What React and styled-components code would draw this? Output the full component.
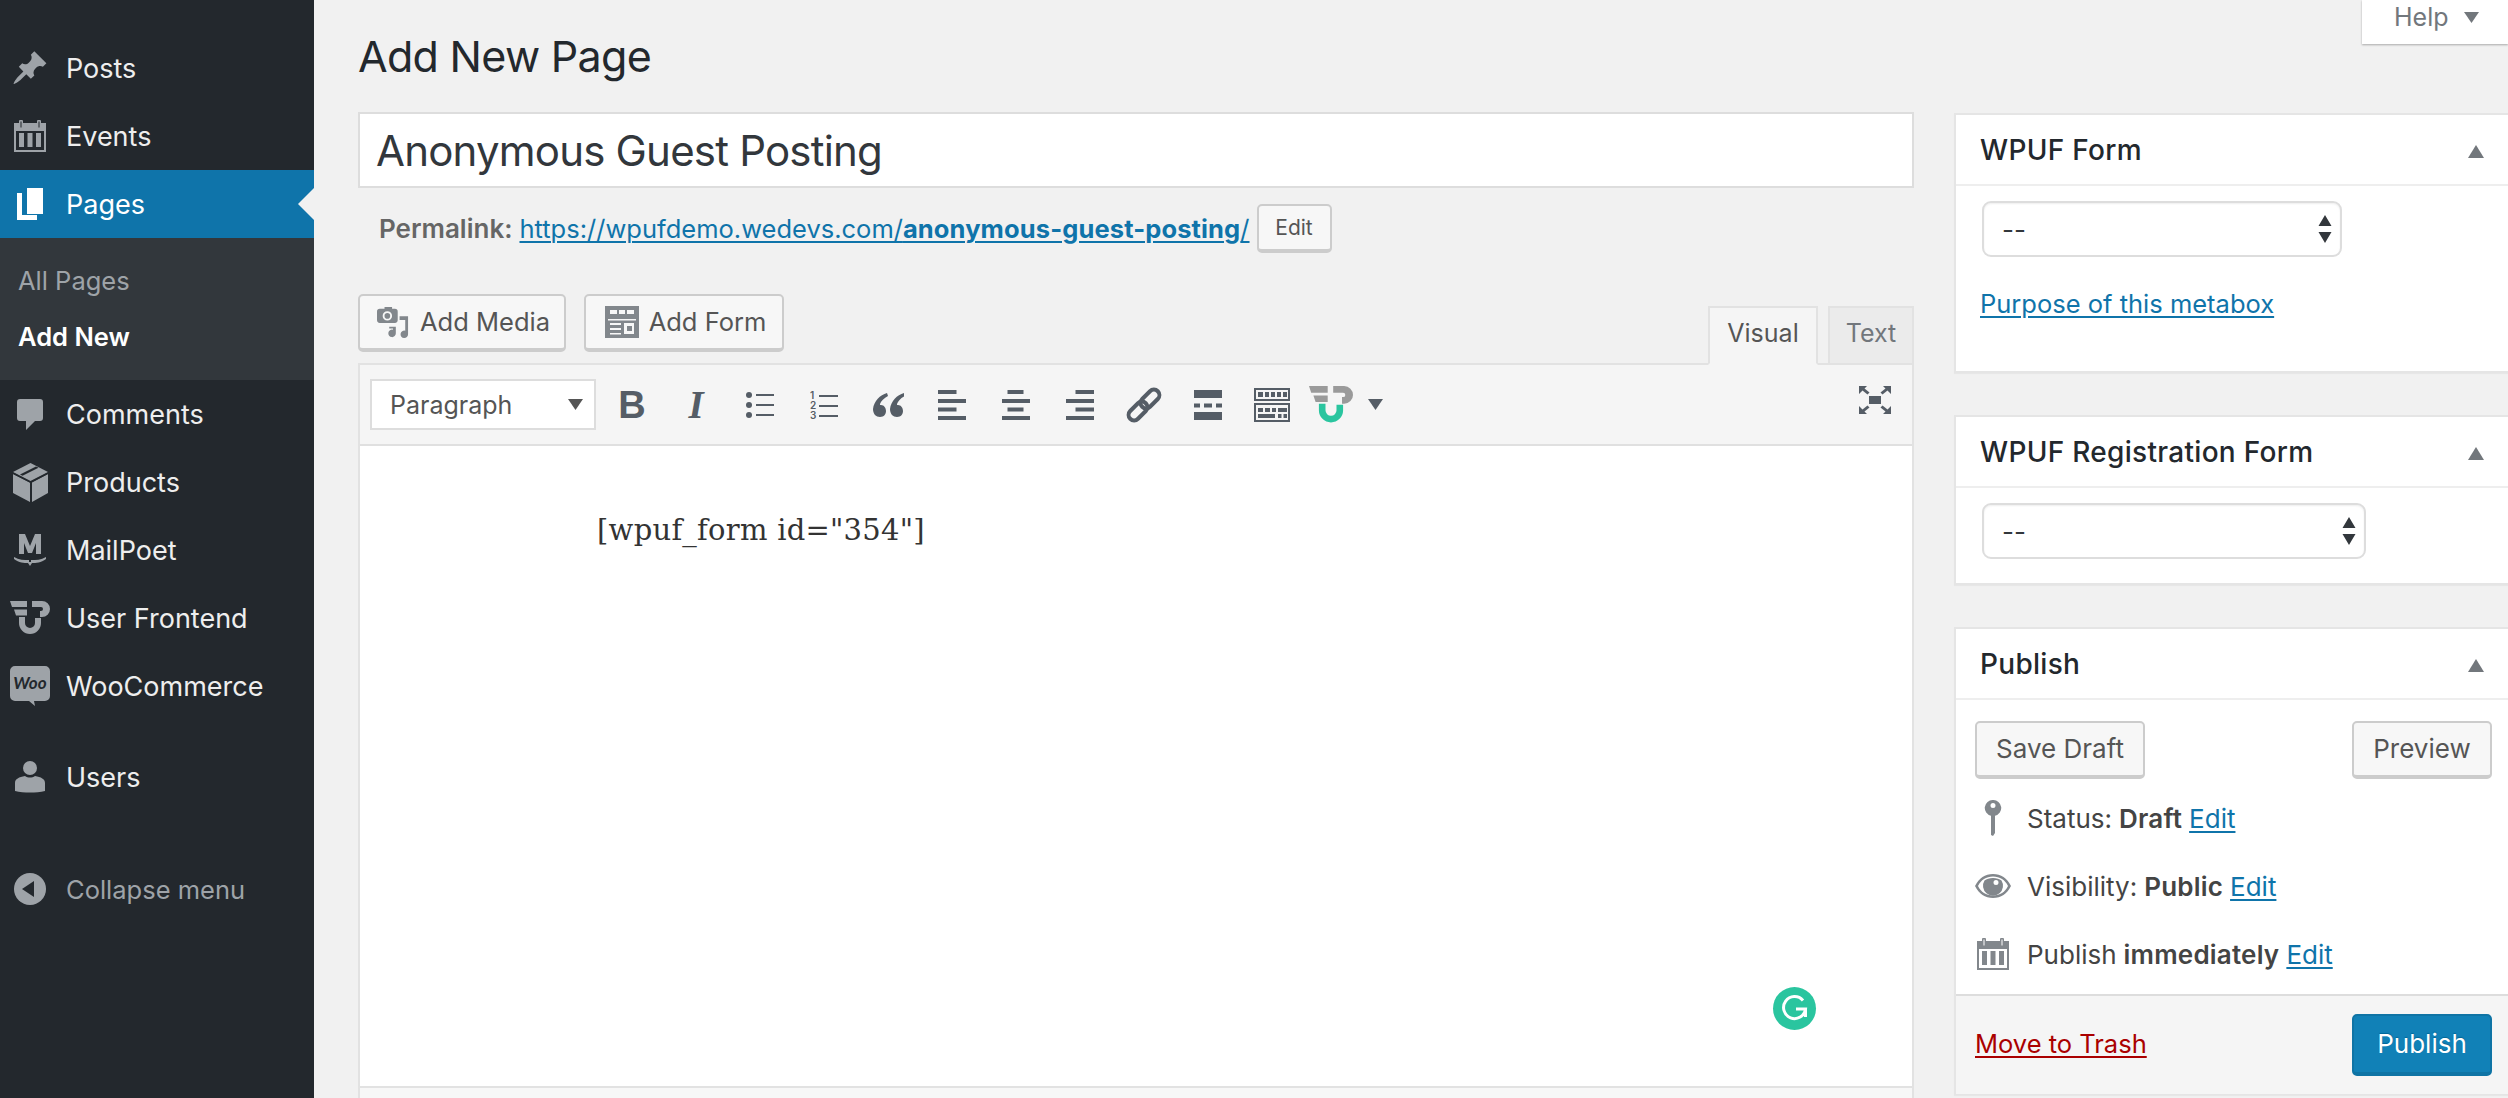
import React from 'react';
import styled, { createGlobalStyle } from 'styled-components';

const Global = createGlobalStyle`
  html, body { margin: 0; padding: 0; background: #f1f1f1; }
  * { box-sizing: border-box; }
  body { font-family: Inter, "Noto Sans", sans-serif; color: #444; }
`;

const Page = styled.div`
  display: flex;
  width: 2508px;
  height: 1098px;
  overflow: hidden;
  background: #f1f1f1;
`;

/* sidebar */
const Sidebar = styled.nav`
  flex: 0 0 314px;
  background: #23282d;
  padding-top: 34px;
`;

const MenuRow = styled.div`
  position: relative;
  display: flex;
  align-items: center;
  height: 68px;
  margin-top: ${({ $gap }) => $gap || 0}px;
  padding-left: 66px;
  font-size: ${({ $muted }) => ($muted ? 25.5 : 27)}px;
  color: ${({ $active, $muted }) => ($active ? '#fff' : $muted ? '#9ea3a8' : '#eee')};
  background: ${({ $active }) => ($active ? '#0f74aa' : 'transparent')};

  ${({ $active }) => $active && `
    &::after {
      content: '';
      position: absolute;
      right: 0;
      top: 18px;
      border: 16px solid transparent;
      border-left: 0;
      border-right-color: #f1f1f1;
    }
  `}
`;

const MenuIcon = styled.span`
  position: absolute;
  left: 0;
  top: 0;
  width: 60px;
  height: 68px;
  display: flex;
  align-items: center;
  justify-content: center;
  color: ${({ $active }) => ($active ? '#fff' : '#9ea3a8')};
  svg { display: block; }
`;

const SubMenu = styled.div`
  height: 142px;
  background: #32373c;
  padding-top: 14px;
`;

const SubItem = styled.div`
  height: 56px;
  padding-left: 18px;
  display: flex;
  align-items: center;
  font-size: 25.5px;
  font-weight: ${({ $current }) => ($current ? 600 : 400)};
  color: ${({ $current }) => ($current ? '#fff' : '#9ea3a8')};
`;

/* main area */
const Main = styled.main`
  position: relative;
  flex: 1;
  min-width: 0;
  overflow: hidden;
  padding-left: 44px;
`;

const HelpTab = styled.div`
  position: absolute;
  right: 0;
  top: 0;
  width: 146px;
  height: 44px;
  background: #fff;
  box-shadow: 0 1px 2px rgba(0, 0, 0, 0.3);
  display: flex;
  align-items: center;
  padding: 0 0 10px 32px;
  gap: 15px;
  font-size: 25px;
  color: #72777c;
`;

const Heading = styled.h1`
  margin: 0;
  height: 112px;
  padding-top: 30px;
  font-size: 43px;
  letter-spacing: -0.7px;
  line-height: 52px;
  font-weight: 400;
  color: #23282d;
`;

const Columns = styled.div`
  display: flex;
  gap: 40px;
  align-items: flex-start;
`;

const LeftColumn = styled.div`
  flex: 0 0 1556px;
`;

const SideColumn = styled.aside`
  flex: 0 0 570px;
  margin-top: 1px;
`;

const TitleInput = styled.div`
  height: 76px;
  border: 2px solid #ddd;
  background: #fff;
  padding-left: 16px;
  display: flex;
  align-items: center;
  font-size: 42px;
  letter-spacing: -0.8px;
  color: #32373c;
`;

const PermalinkRow = styled.div`
  display: flex;
  align-items: center;
  height: 49px;
  margin-top: 16px;
  padding-left: 21px;
  font-size: 25.5px;
  color: #666;
  > b { font-size: 26px; font-weight: 600; margin-right: 7px; }
`;

const BlueLink = styled.a`
  color: #0f74aa;
  text-decoration: underline;
  text-decoration-thickness: 2px;
  text-underline-offset: 3px;
  b { color: #0f74aa; margin: 0; font-weight: 700; letter-spacing: 0.12px; }
`;

const Button = styled.div`
  display: inline-flex;
  align-items: center;
  justify-content: center;
  height: ${({ $h }) => $h || 58}px;
  width: ${({ $w }) => $w}px;
  gap: ${({ $gap }) => $gap || 0}px;
  padding-bottom: 1px;
  border: 2px solid #ccc;
  border-bottom-width: 4px;
  border-radius: 5px;
  background: #f7f7f7;
  font-size: ${({ $fs }) => $fs || 26}px;
  color: #555;
  svg { display: block; color: #82878c; }
`;

const EditButton = styled(Button)`
  margin-left: 7px;
`;

const EditorButton = styled(Button)`
  padding-left: 3px;
  font-size: 25.5px;
`;

const MediaRow = styled.div`
  display: flex;
  height: 69px;
  margin-top: 41px;
  gap: 18px;
  position: relative;
  z-index: 1;
`;

const Tabs = styled.div`
  margin-left: auto;
  align-self: flex-end;
  display: flex;
  gap: 10px;
  margin-bottom: -2px;
`;

const Tab = styled.div`
  height: 59px;
  width: ${({ $w }) => $w}px;
  border: 2px solid #e2e2e2;
  border-bottom-color: ${({ $active }) => ($active ? '#f5f5f5' : '#e2e2e2')};
  background: ${({ $active }) => ($active ? '#f5f5f5' : '#ebebeb')};
  color: ${({ $active }) => ($active ? '#555' : '#72777c')};
  display: flex;
  align-items: center;
  justify-content: center;
  padding-bottom: 5px;
  font-size: 25px;
`;

const EditorBox = styled.div`
  border: 2px solid #e2e2e2;
  background: #fff;
  height: 760px;
`;

const Toolbar = styled.div`
  display: flex;
  align-items: center;
  height: 81px;
  padding: 0 5px 0 10px;
  background: #f5f5f5;
  border-bottom: 2px solid #e0e0e0;
`;

const FormatSelect = styled.div`
  flex: 0 0 226px;
  height: 51px;
  margin-right: 4px;
  background: #fff;
  border: 2px solid #ddd;
  padding: 0 11px 0 18px;
  display: flex;
  align-items: center;
  justify-content: space-between;
  font-size: 25px;
  color: #555;
`;

const ToolSlot = styled.div`
  flex: 0 0 ${({ $w }) => $w || 64}px;
  display: flex;
  align-items: center;
  justify-content: center;
  color: #555d66;
  svg { display: block; }
`;

const FullscreenSlot = styled(ToolSlot)`
  margin-left: auto;
  margin-bottom: 9px;
`;

const BoldGlyph = styled.span`
  font-family: "Liberation Sans", sans-serif;
  font-weight: 700;
  font-size: 38px;
  line-height: 1;
`;

const ItalicGlyph = styled.span`
  font-family: "Liberation Serif", serif;
  font-weight: 700;
  font-style: italic;
  font-size: 39px;
  line-height: 1;
`;

const Content = styled.div`
  height: 640px;
  padding: 64px 0 0 237px;
  position: relative;
  font-family: "DejaVu Serif", serif;
  font-size: 29px;
  line-height: 40px;
  letter-spacing: 0.25px;
  color: #333;
`;

const GrammarlyBadge = styled.div`
  position: absolute;
  left: 1413px;
  top: 541px;
  width: 43px;
  height: 43px;
  border-radius: 50%;
  background: #2ac59f;
  display: flex;
  align-items: center;
  justify-content: center;
`;

const StatusBar = styled.div`
  height: 40px;
  background: #f7f7f7;
  border-top: 2px solid #e2e2e2;
`;

/* meta boxes */
const MetaBox = styled.section`
  background: #fff;
  border: 2px solid #e5e5e5;
  box-shadow: 0 1px 1px rgba(0, 0, 0, 0.04);
  margin-bottom: ${({ $mb }) => $mb || 0}px;
  height: ${({ $h }) => $h}px;
`;

const BoxHeader = styled.header`
  height: 71px;
  padding: 0 38px 0 24px;
  border-bottom: 2px solid #eee;
  display: flex;
  align-items: center;
  justify-content: space-between;
  font-size: 28px;
  font-weight: 500;
  letter-spacing: 0.3px;
  color: #23282d;
`;

const CollapseArrow = styled.span`
  width: 0;
  height: 0;
  margin-top: 4px;
  border-left: 8px solid transparent;
  border-right: 8px solid transparent;
  border-bottom: 13px solid #72777c;
`;

const StepperSelect = styled.div`
  width: ${({ $w }) => $w}px;
  height: 56px;
  margin: 15px 0 0 26px;
  border: 2px solid #ddd;
  border-radius: 9px;
  box-shadow: inset 0 1px 2px rgba(0, 0, 0, 0.07);
  padding: 0 8px 0 18px;
  display: flex;
  align-items: center;
  justify-content: space-between;
  font-size: 26px;
  color: #32373c;
  svg { display: block; }
`;

const PurposeLink = styled(BlueLink)`
  display: block;
  margin: 31px 0 0 24px;
  font-size: 25.5px;
  line-height: 32px;
`;

const PublishActions = styled.div`
  display: flex;
  justify-content: space-between;
  padding: 21px 0 0 19px;
  width: 536px;
`;

const MetaRow = styled.div`
  position: relative;
  display: flex;
  align-items: center;
  height: 68px;
  padding-left: 71px;
  font-size: 26px;
  color: #444;
  b { font-weight: 600; margin: 0 7px; letter-spacing: 0.2px; }
`;

const FirstMetaRow = styled(MetaRow)`
  margin-top: 5px;
`;

const MetaIcon = styled.span`
  position: absolute;
  left: 17px;
  top: 14px;
  width: 40px;
  height: 40px;
  display: flex;
  align-items: center;
  justify-content: center;
  color: #82878c;
  svg { display: block; }
`;

const BoxFooter = styled.div`
  margin-top: 6px;
  height: 100px;
  background: #f5f5f5;
  border-top: 2px solid #ddd;
  display: flex;
  align-items: center;
  justify-content: space-between;
  padding-left: 19px;
`;

const TrashLink = styled.a`
  color: #a00;
  font-size: 25.5px;
  margin-bottom: 4px;
  text-decoration: underline;
  text-decoration-thickness: 2px;
  text-underline-offset: 3px;
`;

const PublishButton = styled.div`
  width: 140px;
  height: 62px;
  margin-right: 30px;
  margin-top: -1px;
  border-radius: 5px;
  border: 2px solid #0f74a5;
  border-bottom-width: 4px;
  background: #1181b7;
  color: #fff;
  display: flex;
  align-items: center;
  justify-content: center;
  font-size: 26px;
  text-shadow: 0 -1px 1px #006799;
`;

const SoftSvg = styled.svg`
  filter: ${({ $blur }) => ($blur ? 'blur(0.6px)' : 'none')};
`;

/* drawings */
const Caret = ({ c = 'currentColor', w = 15, h = 11 }) => (
  <svg width={w} height={h} viewBox="0 0 15 11"><path fill={c} d="M0 0h15L7.5 11z" /></svg>
);

const PinIcon = () => (
  <svg width="38" height="38" viewBox="0 0 20 20" fill="currentColor">
    <path d="M10.44 3.02l1.82-1.82 6.36 6.35-1.83 1.82c-1.05-.68-2.48-.57-3.41.36l-.75.75c-.92.93-1.04 2.35-.35 3.41l-1.83 1.82-2.41-2.41-2.8 2.79c-.42.42-3.38 2.71-3.8 2.29s1.86-3.39 2.28-3.81l2.79-2.79L4.1 9.36l1.83-1.82c1.05.69 2.48.57 3.4-.36l.75-.75c.93-.92 1.05-2.35.36-3.41z" />
  </svg>
);

const CalendarIcon = ({ size = 32 }) => (
  <svg width={size} height={size} viewBox="0 0 32 32" fill="currentColor">
    <path fillRule="evenodd" d="M0 3h5V1.500a2 2 0 0 1 4 0V3h14V1.500a2 2 0 0 1 4 0V3h5v29H0zM6.500 1.500v6h1v-6zM24.500 1.500v6h1v-6zM2 11v19h28V11z" />
    <path d="M5 13h5v14H5zM13.500 13h5v14h-5zM22 13h5v14h-5z" />
  </svg>
);

const PagesIcon = () => (
  <svg width="26" height="32" viewBox="0 0 26 32" fill="currentColor">
    <path d="M10 0h16v26H10z" />
    <path d="M0 5h5v22h15v5H0z" />
  </svg>
);

const CommentIcon = () => (
  <svg width="26" height="31" viewBox="0 0 26 31" fill="currentColor">
    <path d="M3 0h20a3 3 0 0 1 3 3v16a3 3 0 0 1-3 3h-5l-9 9v-9H3a3 3 0 0 1-3-3V3a3 3 0 0 1 3-3z" />
  </svg>
);

const BoxIcon = () => (
  <svg width="35" height="39" viewBox="0 0 35 39" fill="currentColor">
    <path d="M0 11l17 8.500V39L0 30zM35 11v19l-16 9V19.500z" />
    <path d="M17.500 0L35 9l-17.500 9L0 9z" />
    <path d="M7 11.500L23 3.500l2.500 1.300-16 8z" fill="#23282d" />
    <path d="M0 9.500l17.500 9 17.500-9v1.500l-17.500 9L0 11z" fill="#23282d" />
  </svg>
);

const MailPoetIcon = () => (
  <SoftSvg $blur width="34" height="34" viewBox="0 0 34 34" fill="currentColor">
    <path d="M6 1h6l5 12 5-12h6v20h-5V10l-4 10h-4L11 10v11H6z" />
    <path d="M1 24c5 3 10 3 15 3v2h2v-2c5 0 10 0 15-3v2c-5 4-10 4-14 4l-2 3-2-3c-4 0-9 0-14-4z" />
  </SoftSvg>
);

const UserFrontendLogo = ({ top = 'currentColor', bottom = 'currentColor', blur, width = 40 }) => (
  <SoftSvg $blur={blur} width={width} height={(width * 36) / 40} viewBox="0 0 40 36">
    <path fill={top} d="M0 1h17v6H2zM4 9.500h13v6H6zM22 1h10a8 8 0 0 1 8 8v0a8 8 0 0 1-8 8h-2v-6h1a2 2 0 0 0 0-4h-9z" />
    <path fill={bottom} d="M9 17h6v6a5 5 0 0 0 10 0v-5h6v5a11 11 0 0 1-22 0z" />
  </SoftSvg>
);

const WooIcon = () => (
  <svg width="40" height="40" viewBox="0 0 40 40">
    <path fill="currentColor" d="M5 0h30a5 5 0 0 1 5 5v25a5 5 0 0 1-5 5h-11l1 5-6-5H5a5 5 0 0 1-5-5V5a5 5 0 0 1 5-5z" />
    <text x="20" y="23" textAnchor="middle" fontFamily="Lato, sans-serif" fontWeight="700" fontStyle="italic" fontSize="17" fill="#23282d">Woo</text>
  </svg>
);

const UserIcon = () => (
  <svg width="30" height="32" viewBox="0 0 30 32" fill="currentColor">
    <circle cx="15" cy="7" r="7" />
    <path d="M10 15c3 2 7 2 10 0 6 1 10 3 10 7v8c-9 2-21 2-30 0v-8c0-4 4-6 10-7z" />
  </svg>
);

const CollapseIcon = () => (
  <svg width="32" height="32" viewBox="0 0 32 32">
    <circle cx="16" cy="16" r="16" fill="#9ea3a8" />
    <path d="M20 8v16L8 16z" fill="#23282d" />
  </svg>
);

const MediaIcon = () => (
  <svg width="32" height="34" viewBox="0 0 34 34" fill="currentColor">
    <path fillRule="evenodd" d="M6 3h2V1h8v2h3a3 3 0 0 1 3 3v9a3 3 0 0 1-3 3H3a3 3 0 0 1-3-3V6a3 3 0 0 1 3-3zM11 5.500a5 5 0 1 0 0 10 5 5 0 0 0 0-10z" />
    <circle cx="11" cy="10.500" r="3" />
    <path d="M24 11h9v19a4 4 0 1 1-3-3.800V15h-6zM13 22h7v7a4 4 0 1 1-3-3.800V24h-4z" />
  </svg>
);

const FormIcon = () => (
  <svg width="34" height="32" viewBox="0 0 34 32">
    <path fill="currentColor" d="M0 0h34v32H0z" />
    <path fill="#f7f7f7" d="M5 4h7v4H5zM14 4h6v4h-6zM22 4h7v4h-7zM3 13h28v1.500H3zM5 17h11v2H5zM5 22h11v2H5zM5 27h11v1.500H5zM19 17h10v11H19z" />
    <path fill="currentColor" d="M22 20h5v5h-5z" />
  </svg>
);

const ListIcon = () => (
  <svg width="28" height="26" viewBox="0 0 28 26" fill="currentColor">
    <circle cx="3" cy="3" r="3" /><circle cx="3" cy="13" r="3" /><circle cx="3" cy="23" r="3" />
    <path d="M10 2h18v2H10zM10 12h18v2H10zM10 22h18v2H10z" />
  </svg>
);

const NumberedIcon = () => (
  <svg width="28" height="30" viewBox="0 0 28 30" fill="currentColor">
    <text x="0" y="9" fontSize="10" fontFamily="Inter, sans-serif" fontWeight="600">1</text>
    <text x="0" y="19" fontSize="10" fontFamily="Inter, sans-serif" fontWeight="600">2</text>
    <text x="0" y="29" fontSize="10" fontFamily="Inter, sans-serif" fontWeight="600">3</text>
    <path d="M9 5h19v2H9zM9 15h19v2H9zM9 25h19v2H9z" />
  </svg>
);

const QuoteIcon = () => (
  <svg width="31" height="24" viewBox="0 0 31 24" fill="currentColor">
    <path d="M14 0C7 2 1 8 0 16c0 5 3 8 7 8s6-3 6-6-2-6-5-6c-1 0-1 0-1-1 1-3 4-6 8-8zM31 0c-7 2-13 8-14 16 0 5 3 8 7 8s6-3 6-6-2-6-5-6c-1 0-1 0-1-1 1-3 4-6 8-8z" />
  </svg>
);

const AlignIcon = ({ variant }) => {
  const short = variant === 'left' ? 0 : variant === 'center' ? 5.500 : 9.500;
  const w = variant === 'center' ? 16 : 18.500;
  return (
    <svg width="28" height="30" viewBox="0 0 28 30" fill="currentColor">
      <path d="M0 9h28v4H0zM0 26h28v4H0z" />
      <rect x={short} y="0" width={w} height="4" />
      <rect x={short} y="17.500" width={w} height="4" />
    </svg>
  );
};

const LinkIcon = () => (
  <svg width="36" height="36" viewBox="0 0 36 36" fill="none" stroke="currentColor" strokeWidth="4">
    <rect x="-11" y="-5.500" width="22" height="11" rx="5.500" transform="translate(24 12) rotate(-45)" />
    <rect x="-11" y="-5.500" width="22" height="11" rx="5.500" transform="translate(12 24) rotate(-45)" />
  </svg>
);

const MoreIcon = () => (
  <svg width="28" height="30" viewBox="0 0 28 30" fill="currentColor">
    <path d="M0 0h28v8H0zM0 22h28v8H0zM0 13.500h6v4H0zM10 13.500h8v4h-8zM22 13.500h6v4h-6z" />
  </svg>
);

const KitchenIcon = () => (
  <svg width="36" height="34" viewBox="0 0 36 34">
    <path fill="currentColor" fillRule="evenodd" d="M0 0h36v13H0zM2 2v9h32V2zM0 15h36v19H0zM2 17v15h32V17z" />
    <path fill="currentColor" d="M4 4h5v5H4zM11 4h4v5h-4zM17 4h4v5h-4zM23 4h4v5h-4zM29 4h4v5h-4zM4 20h5v4H4zM11 20h5v4h-5zM18 20h4v4h-4zM24 20h9v4h-9zM4 26h17v4H4zM24 26h3.500v4H24zM29.500 26H33v4h-3.500z" />
  </svg>
);

const FullscreenIcon = () => (
  <svg width="32" height="28" viewBox="0 0 32 28" fill="currentColor">
    <path d="M10 10h12v8H10zM0 0h8L5.500 2.500l5 4-2 2-5-4L0 8zM32 0h-8l2.500 2.500-5 4 2 2 5-4L32 8zM0 28h8l-2.500-2.500 5-4-2-2-5 4L0 20zM32 28h-8l2.500-2.500-5-4 2-2 5 4L32 20z" />
  </svg>
);

const StepperArrows = () => (
  <svg width="14" height="28" viewBox="0 0 14 28" fill="#32373c">
    <path d="M7 0l6.500 11H.500zM7 28L.500 17h13z" />
  </svg>
);

const KeyIcon = () => (
  <svg width="18" height="36" viewBox="0 0 18 36" fill="currentColor">
    <path fillRule="evenodd" d="M9 0a8 8 0 0 1 2 15.800V33l-2 3-2-1V15.800A8 8 0 0 1 9 0zM9 3a2.500 2.500 0 1 0 0 5 2.500 2.500 0 0 0 0-5z" />
  </svg>
);

const EyeIcon = () => (
  <svg width="36" height="26" viewBox="0 0 36 26" fill="currentColor">
    <path fillRule="evenodd" d="M0 13C4 5 10 1 18 1s14 4 18 12c-4 8-10 12-18 12S4 21 0 13zM3 13c3 6 8 9.500 15 9.500S30 19 33 13C30 7 25 3.500 18 3.500S6 7 3 13z" />
    <path fillRule="evenodd" d="M9.500 7.500a10 10 0 1 0 17 0c-2-1.500-5-2.500-8.500-2.500s-6.500 1-8.500 2.500zM21 7a2.500 2.500 0 1 1 0 5 2.500 2.500 0 0 1 0-5z" />
  </svg>
);

const GrammarlyMark = () => (
  <svg width="27" height="27" viewBox="0 0 27 27" fill="none" stroke="#fff" strokeWidth="3">
    <path d="M22 5.500A11 11 0 1 0 24.500 14H15" />
    <path d="M24.500 14v8" />
  </svg>
);

const menuTop = [
  { label: 'Posts', icon: <PinIcon /> },
  { label: 'Events', icon: <CalendarIcon /> },
];

const menuBottom = [
  { label: 'Comments', icon: <CommentIcon /> },
  { label: 'Products', icon: <BoxIcon /> },
  { label: 'MailPoet', icon: <MailPoetIcon /> },
  { label: 'User Frontend', icon: <UserFrontendLogo /> },
  { label: 'WooCommerce', icon: <WooIcon /> },
];

const App = () => (
  <Page>
    <Global />
    <Sidebar>
      {menuTop.map((item) => (
        <MenuRow key={item.label}>
          <MenuIcon>{item.icon}</MenuIcon>
          {item.label}
        </MenuRow>
      ))}
      <MenuRow $active>
        <MenuIcon $active><PagesIcon /></MenuIcon>
        Pages
      </MenuRow>
      <SubMenu>
        <SubItem>All Pages</SubItem>
        <SubItem $current>Add New</SubItem>
      </SubMenu>
      {menuBottom.map((item) => (
        <MenuRow key={item.label}>
          <MenuIcon>{item.icon}</MenuIcon>
          {item.label}
        </MenuRow>
      ))}
      <MenuRow $gap={23}>
        <MenuIcon><UserIcon /></MenuIcon>
        Users
      </MenuRow>
      <MenuRow $gap={44} $muted>
        <MenuIcon><CollapseIcon /></MenuIcon>
        Collapse menu
      </MenuRow>
    </Sidebar>

    <Main>
      <HelpTab>Help <Caret /></HelpTab>
      <Heading>Add New Page</Heading>
      <Columns>
        <LeftColumn>
          <TitleInput>Anonymous Guest Posting</TitleInput>
          <PermalinkRow>
            <b>Permalink:</b>
            <BlueLink>https://wpufdemo.wedevs.com/<b>anonymous-guest-posting</b>/</BlueLink>
            <EditButton $w={75} $h={49} $fs={21}>Edit</EditButton>
          </PermalinkRow>
          <MediaRow>
            <EditorButton $w={208} $gap={11}><MediaIcon /> Add Media</EditorButton>
            <EditorButton $w={200} $gap={10}><FormIcon /> Add Form</EditorButton>
            <Tabs>
              <Tab $active $w={110}>Visual</Tab>
              <Tab $w={86}>Text</Tab>
            </Tabs>
          </MediaRow>
          <EditorBox>
            <Toolbar>
              <FormatSelect>Paragraph <Caret /></FormatSelect>
              <ToolSlot><BoldGlyph>B</BoldGlyph></ToolSlot>
              <ToolSlot><ItalicGlyph>I</ItalicGlyph></ToolSlot>
              <ToolSlot><ListIcon /></ToolSlot>
              <ToolSlot><NumberedIcon /></ToolSlot>
              <ToolSlot><QuoteIcon /></ToolSlot>
              <ToolSlot><AlignIcon variant="left" /></ToolSlot>
              <ToolSlot><AlignIcon variant="center" /></ToolSlot>
              <ToolSlot><AlignIcon variant="right" /></ToolSlot>
              <ToolSlot><LinkIcon /></ToolSlot>
              <ToolSlot><MoreIcon /></ToolSlot>
              <ToolSlot><KitchenIcon /></ToolSlot>
              <ToolSlot $w={54}><UserFrontendLogo top="#9a9a9a" bottom="#2ac59f" blur width={44} /></ToolSlot>
              <ToolSlot $w={34}><Caret /></ToolSlot>
              <FullscreenSlot><FullscreenIcon /></FullscreenSlot>
            </Toolbar>
            <Content>
              [wpuf_form id="354"]
              <GrammarlyBadge><GrammarlyMark /></GrammarlyBadge>
            </Content>
            <StatusBar />
          </EditorBox>
        </LeftColumn>

        <SideColumn>
          <MetaBox $h={260} $mb={42}>
            <BoxHeader>WPUF Form <CollapseArrow /></BoxHeader>
            <StepperSelect $w={360}>-- <StepperArrows /></StepperSelect>
            <PurposeLink>Purpose of this metabox</PurposeLink>
          </MetaBox>
          <MetaBox $h={170} $mb={42}>
            <BoxHeader>WPUF Registration Form <CollapseArrow /></BoxHeader>
            <StepperSelect $w={384}>-- <StepperArrows /></StepperSelect>
          </MetaBox>
          <MetaBox $h={468}>
            <BoxHeader>Publish <CollapseArrow /></BoxHeader>
            <PublishActions>
              <Button $w={170}>Save Draft</Button>
              <Button $w={140}>Preview</Button>
            </PublishActions>
            <FirstMetaRow>
              <MetaIcon><KeyIcon /></MetaIcon>
              Status:<b>Draft</b><BlueLink>Edit</BlueLink>
            </FirstMetaRow>
            <MetaRow>
              <MetaIcon><EyeIcon /></MetaIcon>
              Visibility:<b>Public</b><BlueLink>Edit</BlueLink>
            </MetaRow>
            <MetaRow>
              <MetaIcon><CalendarIcon /></MetaIcon>
              Publish<b>immediately</b><BlueLink>Edit</BlueLink>
            </MetaRow>
            <BoxFooter>
              <TrashLink>Move to Trash</TrashLink>
              <PublishButton>Publish</PublishButton>
            </BoxFooter>
          </MetaBox>
        </SideColumn>
      </Columns>
    </Main>
  </Page>
);

export default App;
